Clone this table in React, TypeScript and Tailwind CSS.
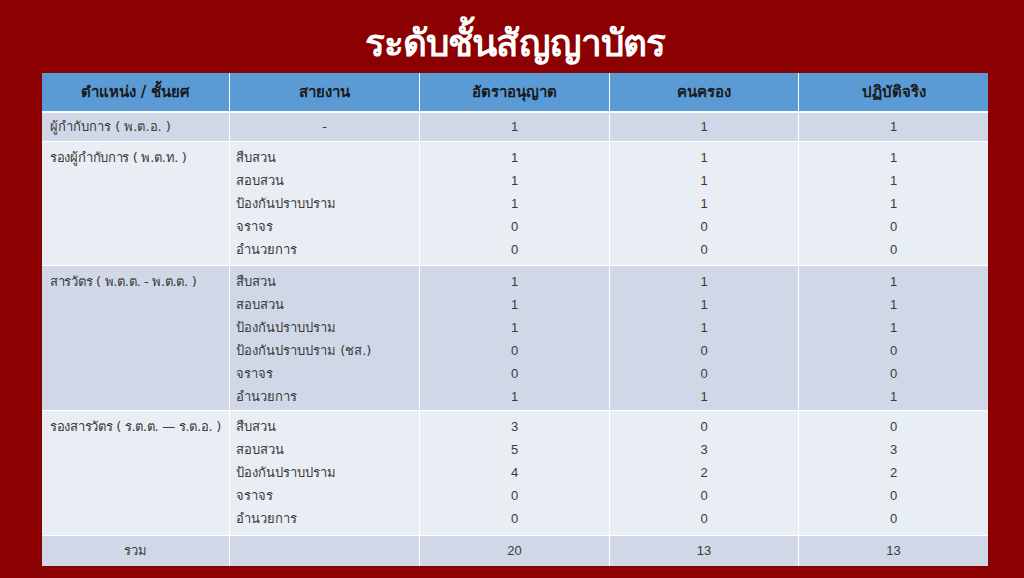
import React from 'react'

type Group = {
  rank: string
  lines: string[]
  quota: string[]
  held: string[]
  actual: string[]
  height: string
  shade: 'dark' | 'light'
}

const groups: Group[] = [
  {
    rank: 'รองผู้กำกับการ ( พ.ต.ท. )',
    lines: ['สืบสวน', 'สอบสวน', 'ป้องกันปราบปราม', 'จราจร', 'อำนวยการ'],
    quota: ['1', '1', '1', '0', '0'],
    held: ['1', '1', '1', '0', '0'],
    actual: ['1', '1', '1', '0', '0'],
    height: 'h-[124px]',
    shade: 'light',
  },
  {
    rank: 'สารวัตร ( พ.ต.ต. - พ.ต.ต. )',
    lines: ['สืบสวน', 'สอบสวน', 'ป้องกันปราบปราม', 'ป้องกันปราบปราม (ชส.)', 'จราจร', 'อำนวยการ'],
    quota: ['1', '1', '1', '0', '0', '1'],
    held: ['1', '1', '1', '0', '0', '1'],
    actual: ['1', '1', '1', '0', '0', '1'],
    height: 'h-[145px]',
    shade: 'dark',
  },
  {
    rank: 'รองสารวัตร ( ร.ต.ต. — ร.ต.อ. )',
    lines: ['สืบสวน', 'สอบสวน', 'ป้องกันปราบปราม', 'จราจร', 'อำนวยการ'],
    quota: ['3', '5', '4', '0', '0'],
    held: ['0', '3', '2', '0', '0'],
    actual: ['0', '3', '2', '0', '0'],
    height: 'h-[125px]',
    shade: 'light',
  },
]

const thai = "font-['Tahoma','DejaVu_Sans','Noto_Sans',sans-serif]"
const num = "font-['Liberation_Sans',Arial,sans-serif]"
const cols = 'grid grid-cols-[188px_190px_190px_189px_189px]'

function Stack({ items, center }: { items: string[]; center?: boolean }) {
  return (
    <div className={center ? 'flex flex-col items-center' : 'flex flex-col'}>
      {items.map((t, i) => (
        <span key={i} className="leading-[23px]">
          {t}
        </span>
      ))}
    </div>
  )
}

export default function App() {
  return (
    <div className={`w-[1024px] h-[578px] bg-[#8b0000] flex flex-col overflow-hidden ${thai}`}>
      <h1 className="h-[73px] flex items-center justify-center pt-[14px] pl-[6px] text-white text-[37px] font-bold tracking-tight">
        ระดับชั้นสัญญาบัตร
      </h1>

      <div className="w-[946px] ml-[42px] flex flex-col text-[13px] text-[#3a3a3a]">
        {/* header */}
        <div className={`${cols} h-[40px] bg-[#5b9bd5] border-b-[2px] border-white text-[#1a1a1a] text-[15px] font-bold`}>
          {['ตำแหน่ง / ชั้นยศ', 'สายงาน', 'อัตราอนุญาต', 'คนครอง', 'ปฏิบัติจริง'].map((h, i) => (
            <div key={i} className={`flex items-center justify-center ${i < 4 ? 'border-r border-white' : ''}`}>
              {h}
            </div>
          ))}
        </div>

        {/* first row */}
        <div className={`${cols} h-[29px] bg-[#d0d8e8] border-b border-white`}>
          <div className="flex items-center pl-[8px] border-r border-white">ผู้กำกับการ ( พ.ต.อ. )</div>
          <div className="flex items-center justify-center border-r border-white">-</div>
          <div className={`flex items-center justify-center border-r border-white ${num}`}>1</div>
          <div className={`flex items-center justify-center border-r border-white ${num}`}>1</div>
          <div className={`flex items-center justify-center ${num}`}>1</div>
        </div>

        {groups.map((g, gi) => (
          <div
            key={gi}
            className={`${cols} ${g.height} border-b border-white ${g.shade === 'dark' ? 'bg-[#d0d8e8]' : 'bg-[#e9edf4]'}`}
          >
            <div className="pt-[4px] pl-[8px] leading-[23px] whitespace-nowrap tracking-[-0.3px] border-r border-white">{g.rank}</div>
            <div className="pt-[4px] pl-[6px] border-r border-white">
              <Stack items={g.lines} />
            </div>
            <div className={`pt-[4px] border-r border-white ${num}`}>
              <Stack items={g.quota} center />
            </div>
            <div className={`pt-[4px] border-r border-white ${num}`}>
              <Stack items={g.held} center />
            </div>
            <div className={`pt-[4px] ${num}`}>
              <Stack items={g.actual} center />
            </div>
          </div>
        ))}

        {/* total */}
        <div className={`${cols} h-[30px] bg-[#d0d8e8]`}>
          <div className="flex items-center justify-center border-r border-white">รวม</div>
          <div className="border-r border-white" />
          <div className={`flex items-center justify-center border-r border-white ${num}`}>20</div>
          <div className={`flex items-center justify-center border-r border-white ${num}`}>13</div>
          <div className={`flex items-center justify-center ${num}`}>13</div>
        </div>
      </div>
    </div>
  )
}
